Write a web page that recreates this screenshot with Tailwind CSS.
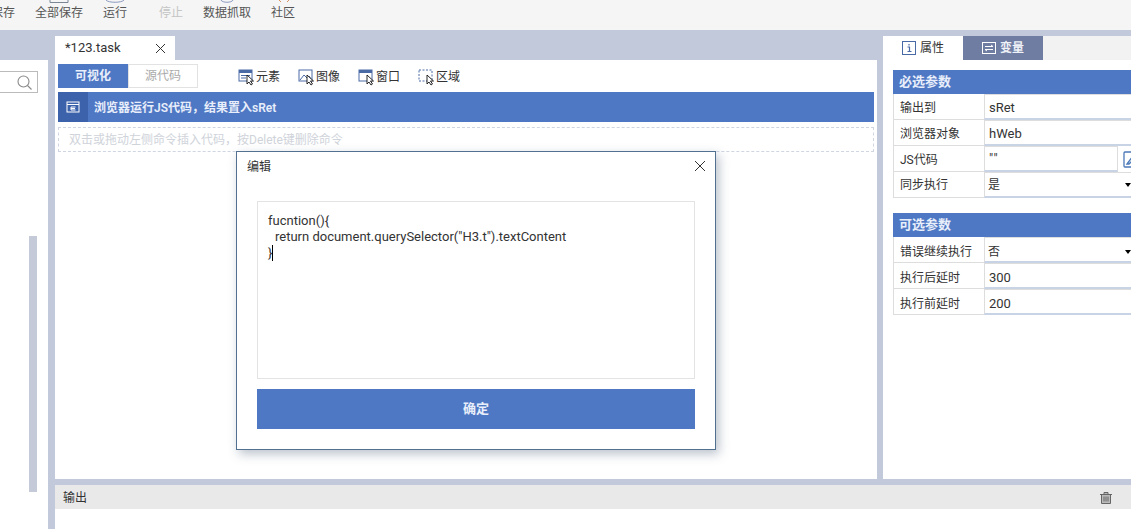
<!DOCTYPE html>
<html lang="zh-CN">
<head>
<meta charset="UTF-8" />
<title>123.task</title>
<script src="https://cdn.jsdelivr.net/npm/@tailwindcss/browser@4"></script>
</head>
<body class="h-[529px] w-[1131px] overflow-hidden bg-[#c1c9da] font-['Roboto','Noto_Sans_CJK_SC',sans-serif] text-[12px] text-[#333]">
<div class="relative flex h-full flex-col">

  <!-- toolbar -->
  <div class="relative flex h-[30px] items-start gap-5 overflow-hidden bg-[#f5f5f5] pl-[15px] text-[#555]">
    <span class="absolute left-[-9px] top-[5px] leading-4">保存</span>
    <div class="ml-5 flex w-12 flex-col items-center"><svg class="h-[3px] w-6" viewBox="0 0 24 3" fill="none" stroke="#7b8794"><path d="M3 0v2.500h18V0"/></svg><span class="mt-[2px] leading-4">全部保存</span></div>
    <div class="flex w-6 flex-col items-center"><svg class="h-[3px] w-6" viewBox="0 0 24 3" fill="none" stroke="#8d9bc0"><path d="M3 0c2 3 16 3 18 0"/></svg><span class="mt-[2px] leading-4">运行</span></div>
    <div class="ml-3 flex w-6 flex-col items-center text-[#c4c4c4]"><span class="mt-[5px] leading-4">停止</span></div>
    <div class="flex w-12 flex-col items-center"><svg class="h-[3px] w-6" viewBox="0 0 24 3" fill="none" stroke="#8d9bc0"><path d="M6 0c1 3 11 3 12 0"/></svg><span class="mt-[2px] leading-4">数据抓取</span></div>
    <div class="flex w-6 flex-col items-center"><svg class="h-[3px] w-6" viewBox="0 0 24 3" fill="none" stroke="#d9925f"><path d="M8 0l2 2M16 2l2-2"/></svg><span class="mt-[2px] leading-4">社区</span></div>
  </div>

  <div class="flex min-h-0 flex-1">
    <!-- left tree panel -->
    <div class="mt-[30px] w-12 bg-white">
      <div class="relative h-full">
        <div class="mt-[11px] flex h-[22px] w-[38px] items-center justify-end border border-l-0 border-[#bbb] pr-1">
          <svg class="h-[17px] w-[17px]" viewBox="0 0 17 17" fill="none" stroke="#8a8a8a" stroke-width="1.100"><circle cx="7.500" cy="7.500" r="5.500"/><path d="M11.500 11.500l4 4"/></svg>
        </div>
        <div class="absolute left-[29px] top-[165px] h-[256px] w-2 bg-[#c5cad9]"></div>
      </div>
    </div>

    <div class="ml-[7px] flex min-w-0 flex-1 flex-col">
      <div class="flex h-[449px] gap-[6px]">
        <!-- editor -->
        <div class="flex w-[822px] flex-col pt-[6px]">
          <div class="flex h-6 w-[120px] items-center justify-between bg-white pl-[10px] pr-[9px] text-[13px] text-[#333]">
            <span>*123.task</span>
            <svg class="h-[11px] w-[11px]" viewBox="0 0 11 11" stroke="#333" fill="none"><path d="M1 1l9 9M10 1l-9 9"/></svg>
          </div>
          <div class="flex-1 bg-white px-[3px] pt-1">
            <div class="flex h-6 items-center">
              <div class="flex h-6 w-[70px] items-center justify-center bg-[#4f78c4] font-semibold text-[#e8eefa]">可视化</div>
              <div class="flex h-6 w-[70px] items-center justify-center border border-[#e2e2e2] text-[#aaa]">源代码</div>
              <div class="ml-10 flex items-center gap-[18px] pt-px text-[#333]">
                <div class="flex items-center">
                  <svg class="h-[18px] w-[18px]" viewBox="0 0 18 18"><rect x="1" y="2" width="13" height="11" fill="#fff" stroke="#4a6aa5"/><rect x="1" y="2" width="13" height="3" fill="#4a6aa5"/><path d="M3 7.500h9M3 10h5" stroke="#4a6aa5"/><path d="M9 7l0 9 2-2 2 3 1.500-1-2-3h3z" fill="#fff" stroke="#111" stroke-width=".9"/></svg>
                  <span>元素</span>
                </div>
                <div class="flex items-center">
                  <svg class="h-[18px] w-[18px]" viewBox="0 0 18 18"><rect x="1" y="2" width="13" height="11" fill="#fff" stroke="#4a6aa5"/><path d="M2 12l4-5 3 3 2-2 2 3" fill="none" stroke="#4a6aa5"/><path d="M9 7l0 9 2-2 2 3 1.500-1-2-3h3z" fill="#fff" stroke="#111" stroke-width=".9"/></svg>
                  <span>图像</span>
                </div>
                <div class="flex items-center">
                  <svg class="h-[18px] w-[18px]" viewBox="0 0 18 18"><rect x="1" y="2" width="13" height="11" fill="#fff" stroke="#4a6aa5"/><rect x="1" y="2" width="13" height="3" fill="#4a6aa5"/><path d="M9 7l0 9 2-2 2 3 1.500-1-2-3h3z" fill="#fff" stroke="#111" stroke-width=".9"/></svg>
                  <span>窗口</span>
                </div>
                <div class="flex items-center">
                  <svg class="h-[18px] w-[18px]" viewBox="0 0 18 18"><rect x="1" y="2" width="13" height="11" fill="#fff" stroke="#4a6aa5" stroke-dasharray="2 1.500"/><path d="M9 7l0 9 2-2 2 3 1.500-1-2-3h3z" fill="#fff" stroke="#111" stroke-width=".9"/></svg>
                  <span>区域</span>
                </div>
              </div>
            </div>
            <div class="mt-1 flex h-[30px] items-center bg-[#4f78c4] font-semibold text-[#e8eefa]">
              <div class="flex h-full w-[30px] items-center justify-center bg-[#3c62ab]">
                <svg class="h-[14px] w-[14px]" viewBox="0 0 14 14" fill="none" stroke="#fff"><rect x="1" y="2" width="12" height="10"/><path d="M1 4.500h12M5 7h4.500M5 7v3h4.500M5 8.500h4"/></svg>
              </div>
              <span class="ml-[6px] pt-px">浏览器运行JS代码，结果置入sRet</span>
            </div>
            <div class="mt-[5px] flex h-[25px] items-center border border-dashed border-[#cfd6e2] pl-[10px] text-[#cfd3da]">双击或拖动左侧命令插入代码，按Delete键删除命令</div>
          </div>
        </div>

        <!-- properties panel -->
        <div class="min-w-0 flex-1 pt-[6px]">
          <div class="flex h-full flex-col bg-white">
            <div class="flex h-6 bg-[#f2f2f2]">
              <div class="flex w-20 items-center justify-center gap-1 bg-white text-[#333]">
                <svg class="h-[14px] w-[14px]" viewBox="0 0 14 14" fill="none" stroke="#4a6aa5"><rect x=".5" y=".5" width="13" height="13"/><path d="M7 3v1.500M5.500 6H7.500v4.500M5.500 10.500h4" stroke-width="1.200"/></svg>
                <span>属性</span>
              </div>
              <div class="flex w-20 items-center justify-center gap-1 bg-[#6f7da3] font-semibold text-[#eef1f7]">
                <svg class="h-[14px] w-[14px]" viewBox="0 0 14 14" fill="none" stroke="#fff"><rect x=".5" y="1.500" width="13" height="11"/><path d="M3 5.500h8l-2-1.500M11 8.500H3l2 1.500"/></svg>
                <span>变量</span>
              </div>
            </div>
            <div class="pl-[10px] pt-[10px]">
              <div class="flex h-6 items-center bg-[#4f78c4] pl-[6px] text-[13px] font-bold text-[#e8eefa]">必选参数</div>
              <div class="grid grid-cols-[90px_minmax(0,1fr)] border-l border-[#ddd] [&>*]:h-[26px]">
                <div class="flex items-center border-b border-[#ddd] pl-[6px] pt-[2px]">输出到</div>
                <div class="flex items-center border-t border-l border-t-[#ddd] border-b-2 border-b-[#c9d3e6] border-l-[#ddd] pl-1 pt-[2px] text-[13px]">sRet</div>
                <div class="flex items-center border-b border-[#ddd] pl-[6px] pt-[2px]">浏览器对象</div>
                <div class="flex items-center border-t border-l border-t-[#ddd] border-b-2 border-b-[#c9d3e6] border-l-[#ddd] pl-1 pt-[2px] text-[13px]">hWeb</div>
                <div class="flex items-center border-b border-[#ddd] pl-[6px] pt-[2px]">JS代码</div>
                <div class="flex items-center overflow-hidden">
                  <div class="flex h-full w-[134px] shrink-0 items-center border border-b-2 border-[#ddd] border-b-[#c9d3e6] pl-1 text-[13px] tracking-[1px]">""</div>
                  <svg class="ml-[5px] h-[17px] w-[17px] shrink-0" viewBox="0 0 17 17" fill="none" stroke="#4a78b8" stroke-width="1.300"><rect x="1" y="1" width="15" height="15" rx="1"/><path d="M4 13l6-8 2 2-6 6z"/></svg>
                </div>
                <div class="flex items-center border-b border-[#ddd] pl-[6px]">同步执行</div>
                <div class="flex items-center justify-between border-t border-l border-t-[#ddd] border-b-2 border-b-[#c9d3e6] border-l-[#ddd] pl-[3px] pr-0">
                  <span>是</span><span class="h-0 w-0 border-x-[3px] border-t-[4px] border-x-transparent border-t-black"></span>
                </div>
              </div>
              <div class="mt-[15px] flex h-6 items-center bg-[#4f78c4] pl-[6px] text-[13px] font-bold text-[#e8eefa]">可选参数</div>
              <div class="grid grid-cols-[90px_minmax(0,1fr)] border-l border-[#ddd] [&>*]:h-[26px]">
                <div class="flex items-center border-b border-[#ddd] pl-[6px] pt-[4px]">错误继续执行</div>
                <div class="flex items-center justify-between border-t border-l border-t-[#ddd] border-b-2 border-b-[#c9d3e6] border-l-[#ddd] pl-[3px] pr-0 pt-[4px]">
                  <span>否</span><span class="h-0 w-0 border-x-[3px] border-t-[4px] border-x-transparent border-t-black"></span>
                </div>
                <div class="flex items-center border-b border-[#ddd] pl-[6px] pt-[4px]">执行后延时</div>
                <div class="flex items-center border-t border-l border-t-[#ddd] border-b-2 border-b-[#c9d3e6] border-l-[#ddd] pl-1 pt-[4px] text-[13px]">300</div>
                <div class="flex items-center border-b border-[#ddd] pl-[6px] pt-[4px]">执行前延时</div>
                <div class="flex items-center border-t border-l border-t-[#ddd] border-b-2 border-b-[#c9d3e6] border-l-[#ddd] pl-1 pt-[4px] text-[13px]">200</div>
              </div>
            </div>
          </div>
        </div>
      </div>

      <!-- output -->
      <div class="mt-[6px] flex h-6 items-center justify-between bg-[#e9e9e9] pl-2 pr-[19px] text-[#333]">
        <span class="pt-px">输出</span>
        <svg class="mt-px h-3 w-3" viewBox="0 0 12 12" fill="#bbb" stroke="#666"><path d="M0 2.500h12M4 2.500V.5h4v2M1.500 2.500v9h9v-9zM4 4.500v5M6 4.500v5M8 4.500v5"/></svg>
      </div>
      <div class="flex-1 bg-white"></div>
    </div>
  </div>

  <!-- edit dialog -->
  <div class="absolute left-[236px] top-[151px] flex h-[299px] w-[480px] flex-col border border-[#52708f] bg-white shadow-[3px_4px_10px_rgba(60,80,110,0.35)]">
    <div class="flex h-[49px] items-start justify-between pl-[10px] pr-[9px] pt-[5px]">
      <span class="leading-5">编辑</span>
      <svg class="mt-[3px] h-3 w-3" viewBox="0 0 12 12" stroke="#333" fill="none"><path d="M1 1l10 10M11 1L1 11"/></svg>
    </div>
    <div class="mx-5 h-[178px] border border-[#e3e3e3] px-[10px] pt-[11px] text-[13px] leading-4">
      <div>fucntion(){</div>
      <div class="pl-[7px]">return document.querySelector("H3.t").textContent</div>
      <div class="flex items-center">}<span class="h-4 w-px bg-black"></span></div>
    </div>
    <div class="mx-5 mt-[10px] flex h-10 items-center justify-center bg-[#4f78c4] text-[13px] font-semibold text-[#e8eefa]">确定</div>
  </div>
</div>
</body>
</html>
